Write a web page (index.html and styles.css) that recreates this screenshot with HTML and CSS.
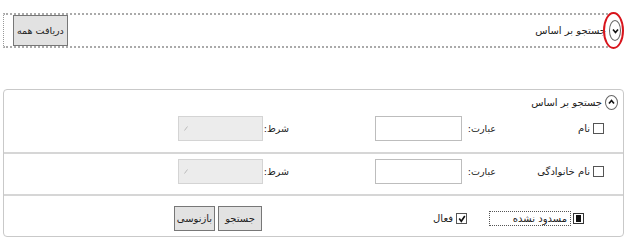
FILE: index.html
```html
<!DOCTYPE html>
<html lang="fa" dir="rtl">
<head>
<meta charset="utf-8">
<link rel="stylesheet" href="styles.css">
</head>
<body>
<div class="topbar">
  <span class="toggle"><svg width="7" height="6" viewBox="0 0 7 6"><path d="M1 1.5 L3.5 4.5 L6 1.5" fill="none" stroke="#111" stroke-width="1.6"/></svg></span>
  <span class="ring"></span>
  <div class="bar">
    <span class="title">جستجو بر اساس</span>
    <button class="btn btn-all">دریافت همه</button>
  </div>
</div>

<div class="panel">
  <div class="sec sec1">
    <div class="head">
      <span class="toggle small"><svg width="7" height="6" viewBox="0 0 7 6"><path d="M1 4.5 L3.5 1.5 L6 4.5" fill="none" stroke="#111" stroke-width="1.6"/></svg></span>
      <span class="head-title">جستجو بر اساس</span>
    </div>
    <div class="row">
      <div class="name-cell"><span class="cb"></span><span class="cb-label">نام</span></div>
      <span class="lbl">عبارت:</span>
      <span class="input"></span>
      <span class="lbl2">شرط:</span>
      <span class="select"><svg width="4" height="5" viewBox="0 0 4 5"><path d="M0.5 4.5 L3.5 0.5" stroke="#bbb" stroke-width="1"/></svg></span>
    </div>
  </div>
  <div class="sec sec2">
    <div class="row">
      <div class="name-cell"><span class="cb"></span><span class="cb-label">نام خانوادگی</span></div>
      <span class="lbl">عبارت:</span>
      <span class="input"></span>
      <span class="lbl2">شرط:</span>
      <span class="select"><svg width="4" height="5" viewBox="0 0 4 5"><path d="M0.5 4.5 L3.5 0.5" stroke="#bbb" stroke-width="1"/></svg></span>
    </div>
  </div>
  <div class="sec sec3">
    <div class="row">
      <div class="filters">
        <span class="cb cb-ind"><span class="ind"></span></span>
        <span class="focus-box">مسدود نشده</span>
        <span class="cb cb-check"><svg width="8" height="8" viewBox="0 0 8 8"><path d="M1.2 3.5 L3.3 6.3 L6.8 1" fill="none" stroke="#111" stroke-width="1.6"/></svg></span>
        <span class="cb-label">فعال</span>
      </div>
      <button class="btn btn-sm btn-search">جستجو</button>
      <button class="btn btn-sm btn-reset">بازنوسی</button>
    </div>
  </div>
</div>
</body>
</html>
```

FILE: styles.css
```css
html, body {
  margin: 0;
  padding: 0;
}
body {
  width: 630px;
  height: 243px;
  overflow: hidden;
  background: #fff;
  color: #222;
  font-family: "DejaVu Sans", "Noto Sans", sans-serif;
  font-size: 10px;
}

.topbar {
  position: relative;
  display: flex;
  align-items: center;
  height: 35px;
  margin: 13px 9px 0 3px;
}
.toggle {
  flex: none;
  display: flex;
  align-items: center;
  justify-content: center;
  width: 10px;
  height: 19px;
  border: 1px solid #666;
  border-radius: 50%;
  margin-left: 1px;
  background: #fff;
}
.toggle.small {
  width: 11px;
  height: 13px;
}
.ring {
  position: absolute;
  right: -3px;
  top: -1px;
  width: 17px;
  height: 33px;
  border: 2px solid #d8141c;
  border-radius: 50%;
}
.bar {
  flex: 1;
  display: flex;
  align-items: center;
  height: 31px;
  border-top: 2px dotted #aaa;
  border-bottom: 2px dotted #aaa;
  border-left: 1px dotted #999;
  padding: 0 2px 0 9px;
}
.title {
  flex: 1;
}
.btn {
  font: inherit;
  color: #222;
  background: #e2e2e2;
  border: 1px solid #777;
  border-radius: 0;
  padding: 0 5px;
  margin: 0;
  white-space: nowrap;
}
.btn-all {
  height: 31px;
  padding: 0 3px;
  font-size: 9.5px;
}

.panel {
  margin: 41px 6px 0 3px;
  border: 1px solid #c9c9c9;
  border-radius: 4px;
}
.sec {
  border-bottom: 2px solid #d6d6d6;
  padding-right: 19px;
}
.sec:last-child {
  border-bottom: 0;
}
.sec1 {
  padding-top: 5px;
  padding-bottom: 11px;
}
.sec2 {
  padding-top: 5px;
  padding-bottom: 10px;
}
.sec3 {
  padding-top: 10px;
  padding-bottom: 5px;
}
.head {
  display: flex;
  align-items: center;
  height: 14px;
  margin-right: -14px;
  margin-bottom: 7px;
}
.head-title {
  margin-right: 2px;
}
.row {
  display: flex;
  align-items: center;
  height: 25px;
}
.name-cell {
  flex: none;
  width: 108px;
  display: flex;
  align-items: center;
}
.cb {
  flex: none;
  box-sizing: border-box;
  width: 11px;
  height: 11px;
  border: 1px solid #555;
  background: #fff;
  display: flex;
  align-items: center;
  justify-content: center;
}
.cb-label {
  margin-right: 3px;
}
.lbl {
  flex: none;
  width: 34px;
  white-space: nowrap;
  font-size: 9.5px;
}
.input {
  flex: none;
  box-sizing: border-box;
  width: 87px;
  height: 25px;
  border: 1px solid #bdbdbd;
  background: #fff;
}
.lbl2 {
  flex: none;
  width: 26px;
  margin-right: 86px;
  white-space: nowrap;
  font-size: 9.5px;
}
.select {
  flex: none;
  box-sizing: border-box;
  width: 85px;
  height: 25px;
  border: 1px solid #d4d4d4;
  background: #ececec;
  display: flex;
  align-items: center;
  justify-content: flex-end;
  padding-left: 5px;
}

.filters {
  flex: none;
  width: 342px;
  display: flex;
  align-items: center;
}
.cb-ind {
  margin-right: 20px;
  border-color: #333;
}
.ind {
  width: 5px;
  height: 7px;
  background: #111;
}
.focus-box {
  box-sizing: border-box;
  width: 82px;
  height: 15px;
  margin-right: 2px;
  border: 1px dotted #555;
  padding-right: 3px;
  line-height: 13px;
}
.cb-check {
  margin-right: 22px;
}
.btn-sm {
  height: 25px;
  box-sizing: border-box;
}
.btn-search {
  width: 44px;
}
.btn-reset {
  width: 41px;
  margin-right: 3px;
  padding: 0;
}
```
